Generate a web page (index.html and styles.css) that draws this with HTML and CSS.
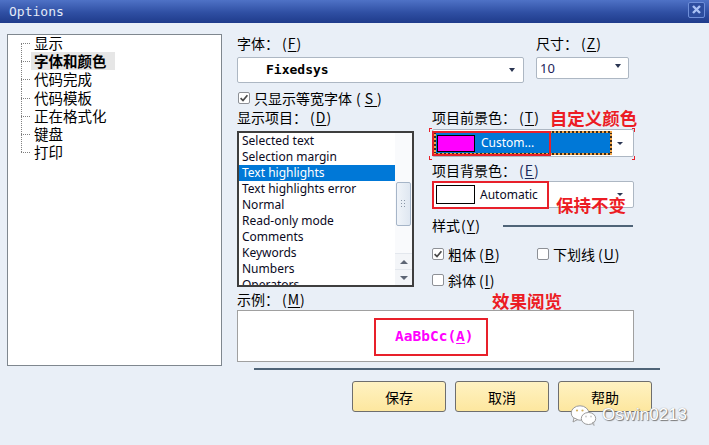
FILE: index.html
```html
<!DOCTYPE html>
<html lang="zh-CN">
<head>
<meta charset="utf-8">
<title>Options</title>
<link rel="stylesheet" href="styles.css">
</head>
<body>
<div class="titlebar">
  <span class="title">Options</span>
  <span class="close"><svg width="17" height="16" viewBox="0 0 17 16"><path d="M5 4 L12 11 M12 4 L5 11" stroke="#a9c1f5" stroke-width="2.4" fill="none"/></svg></span>
</div>
<div class="main">
  <div class="tree">
    <ul>
      <li class="first"><span class="conn"></span><span class="txt">显示</span></li>
      <li class="sel"><span class="conn"></span><span class="txt">字体和颜色</span></li>
      <li><span class="conn"></span><span class="txt">代码完成</span></li>
      <li><span class="conn"></span><span class="txt">代码模板</span></li>
      <li><span class="conn"></span><span class="txt">正在格式化</span></li>
      <li><span class="conn"></span><span class="txt">键盘</span></li>
      <li class="last"><span class="conn"></span><span class="txt">打印</span></li>
    </ul>
  </div>
  <div class="right">
    <div class="row1">
      <div class="font-fld">
        <div class="lbl">字体：<span class="key">(<u>F</u>)</span></div>
        <div class="combo font-combo"><span class="fixed">Fixedsys</span><span class="arrow"></span></div>
      </div>
      <div class="size-fld">
        <div class="lbl">尺寸：<span class="key">(<u>Z</u>)</span></div>
        <div class="combo size-combo"><span class="size-val">10</span><span class="arrow up"></span></div>
      </div>
    </div>
    <div class="chk-row top-chk"><span class="chk on"><svg width="12" height="12" viewBox="0 0 12 12"><path d="M2.6 6.2 L5 8.6 L9.4 3.2" stroke="#4a4a4a" stroke-width="1.7" fill="none"/></svg></span>只显示等宽字体<span class="key wide">(<u>S</u>)</span></div>
    <div class="cols">
      <div class="col-left">
        <div class="lbl">显示项目：<span class="key">(<u>D</u>)</span></div>
        <div class="listbox">
          <ul class="items">
            <li>Selected text</li>
            <li>Selection margin</li>
            <li class="hl">Text highlights</li>
            <li>Text highlights error</li>
            <li>Normal</li>
            <li>Read-only mode</li>
            <li>Comments</li>
            <li>Keywords</li>
            <li>Numbers</li>
            <li>Operators</li>
          </ul>
          <div class="scrollbar">
            <div class="thumb"><svg width="5" height="8" viewBox="0 0 5 8"><g fill="#8a96a6"><rect x="0" y="0" width="1" height="1"/><rect x="3" y="0" width="1" height="1"/><rect x="0" y="3" width="1" height="1"/><rect x="3" y="3" width="1" height="1"/><rect x="0" y="6" width="1" height="1"/><rect x="3" y="6" width="1" height="1"/></g></svg></div>
            <div class="sb-space"></div>
            <div class="sb-btn"><span class="tri-up"></span></div>
            <div class="sb-btn"><span class="tri-down"></span></div>
          </div>
        </div>
      </div>
      <div class="col-right">
        <div class="lbl-row">
          <span class="lbl">项目前景色：<span class="key">(<u>T</u>)</span></span>
          <span class="note note-fg">自定义颜色</span>
        </div>
        <div class="combo color-combo fg">
          <div class="sel-area"><span class="swatch magenta"></span><span class="ctext">Custom...</span></div>
          <span class="arrow small"></span>
          <span class="redbox rb-fg"></span>
          <span class="corners"></span>
        </div>
        <div class="lbl bg-lbl">项目背景色：<span class="key navy">(<u>E</u>)</span></div>
        <div class="combo color-combo bg">
          <span class="swatch white"></span><span class="ctext dark">Automatic</span>
          <span class="arrow small"></span>
          <span class="redbox rb-bg"></span>
          <span class="note note-bg">保持不变</span>
        </div>
        <div class="style-row">
          <span class="lbl style-lbl">样式<span class="key tight">(<u>Y</u>)</span></span>
          <span class="rule"></span>
        </div>
        <div class="chk-row style-chk">
          <span class="chk-item first-item"><span class="chk on"><svg width="12" height="12" viewBox="0 0 12 12"><path d="M2.6 6.2 L5 8.6 L9.4 3.2" stroke="#4a4a4a" stroke-width="1.7" fill="none"/></svg></span>粗体<span class="key">(<u>B</u>)</span></span>
          <span class="chk-item"><span class="chk"></span>下划线<span class="key">(<u>U</u>)</span></span>
        </div>
        <div class="chk-row style-chk2">
          <span class="chk-item"><span class="chk"></span>斜体<span class="key">(<u>I</u>)</span></span>
        </div>
      </div>
    </div>
    <div class="lbl-row sample-row">
      <span class="lbl sample-lbl">示例：<span class="key">(<u>M</u>)</span></span>
      <span class="note note-sample">效果阅览</span>
    </div>
    <div class="sample">
      <div class="sample-mark">AaBbCc(<u>A</u>)</div>
    </div>
    <div class="sep"></div>
    <div class="buttons">
      <button class="btn">保存</button>
      <button class="btn">取消</button>
      <button class="btn">帮助</button>
    </div>
  </div>
</div>
<div class="watermark">
  <svg width="27" height="22" viewBox="0 0 27 22">
    <ellipse cx="10" cy="9" rx="8.8" ry="7.2" fill="#fff" stroke="#9a9a9a" stroke-width="1"/>
    <path d="M4 14 L3 18 L7.5 15.5 Z" fill="#fff" stroke="#9a9a9a" stroke-width="1"/>
    <ellipse cx="18.5" cy="14.5" rx="7.2" ry="6" fill="#fff" stroke="#9a9a9a" stroke-width="1"/>
    <path d="M22 19 L24 21.5 L23.5 18 Z" fill="#fff" stroke="#9a9a9a" stroke-width="0.8"/>
    <circle cx="7" cy="6.5" r="1.1" fill="#d2b060"/>
    <circle cx="12.5" cy="6.5" r="1.1" fill="#d2b060"/>
    <circle cx="16" cy="12.5" r="0.9" fill="#c9c9c9"/>
    <circle cx="21" cy="12.5" r="0.9" fill="#c9c9c9"/>
  </svg>
  <span class="wm-text">Oswin0213</span>
</div>
</body>
</html>
```
FILE: styles.css
```css
* { box-sizing: border-box; margin: 0; padding: 0; }
html, body { width: 709px; height: 445px; overflow: hidden; }
body {
  background: #e9eff7;
  font-family: "Noto Sans CJK SC", "Noto Sans", sans-serif;
  font-size: 14px;
  line-height: 20px;
  color: #000;
  position: relative;
}
u { text-decoration: underline; text-underline-offset: 2px; }

/* title bar */
.titlebar {
  height: 23px;
  display: flex;
  align-items: center;
  padding: 0 4px 0 9px;
  background: linear-gradient(#4f72c6, #2f4fa3 55%, #1f3b8b);
}
.title {
  font-family: "DejaVu Sans Mono", monospace;
  font-size: 13px;
  line-height: 23px;
  color: #e3eaf8;
}
.close {
  margin-left: auto;
  align-self: flex-start;
  margin-top: 2px;
  width: 17px;
  height: 16px;
  background: #2d4d9f;
  border: 1px solid #6f8fd9;
  border-radius: 2px;
  display: flex;
}
.close svg { margin: -1px; }

/* main area */
.main { display: flex; padding: 11px 0 0 7px; }

.tree {
  width: 215px;
  height: 332px;
  flex: none;
  border: 1px solid #7f878f;
  background: #fff;
  padding-left: 13px;
}
.tree ul { list-style: none; margin-top: -1px; }
.tree li { display: flex; height: 18.2px; }
.conn {
  width: 10px;
  flex: none;
  background-image:
    repeating-linear-gradient(to bottom, #808080 0 1px, transparent 1px 2px),
    repeating-linear-gradient(to right, #808080 0 1px, transparent 1px 2px);
  background-size: 1px 100%, 10px 1px;
  background-position: 0 0, 0 9px;
  background-repeat: no-repeat;
}
.tree li.first .conn { background-size: 1px 9px, 10px 1px; background-position: 0 10px, 0 9px; }
.tree li.last .conn { background-size: 1px 10px, 10px 1px; background-position: 0 0, 0 9px; }
.tree .txt {
  font-size: 14.5px;
  line-height: 18.2px;
  padding: 0 8px 0 3px;
  white-space: nowrap;
}
.tree li.sel .txt { background: #e6e6e6; font-weight: bold; }

/* right side */
.right { margin-left: 15px; margin-top: -1px; width: 440px; flex: none; }
.lbl { height: 20px; line-height: 20px; white-space: nowrap; display: block; }
.key { margin-left: 3px; letter-spacing: 1px; }
.key.wide { letter-spacing: 4px; margin-left: 4px; }
.key.tight { margin-left: 1px; }
.key.navy { color: #1a2a5a; }

.row1 { display: flex; gap: 12px; }
.font-fld { width: 287px; }
.size-fld { width: 93px; }
.combo {
  background: #fff;
  border: 1px solid #adb7c3;
  border-radius: 2px;
  display: flex;
  align-items: center;
  position: relative;
}
.font-combo { height: 26px; margin-top: 4px; padding-left: 28px; }
.size-combo { height: 22px; margin-top: 4px; padding-left: 3px; }
.fixed {
  font-family: "DejaVu Sans Mono", monospace;
  font-weight: bold;
  font-size: 13px;
  line-height: 20px;
}
.size-val { font-family: "Noto Sans", sans-serif; font-size: 13px; color: #1e1e5a; line-height: 18px; }
.arrow {
  margin-left: auto;
  margin-right: 8px;
  width: 0;
  height: 0;
  border-left: 3.5px solid transparent;
  border-right: 3.5px solid transparent;
  border-top: 4px solid #2a3552;
}
.arrow.up { margin-right: 7px; margin-bottom: 4px; }
.arrow.small { border-left-width: 3px; border-right-width: 3px; border-top-width: 3.5px; margin-right: 9px; }

.chk-row { display: flex; align-items: center; height: 18px; line-height: 18px; white-space: nowrap; }
.top-chk { margin-top: 6px; margin-left: 1px; }
.chk {
  width: 12px;
  height: 12px;
  flex: none;
  border: 1px solid #8d9096;
  border-radius: 2px;
  background: #fff;
  margin-right: 4px;
  display: flex;
}
.chk svg { margin: -1px; }
.chk-item { display: flex; align-items: center; }

.cols { display: flex; }
.col-left { width: 177px; flex: none; }
.col-right { width: 202px; margin-left: 18px; flex: none; }

.listbox {
  margin-top: 4px;
  height: 156px;
  border: 2px solid #3e3e3e;
  background: #fff;
  display: flex;
}
.items {
  flex: 1;
  list-style: none;
  overflow: hidden;
  font-family: "Noto Sans", sans-serif;
  font-size: 12px;
  color: #0a0a1e;
}
.items li { height: 16px; line-height: 16px; padding-left: 3px; white-space: nowrap; }
.items li.hl { background: #0078d7; color: #fff; }
.scrollbar {
  width: 17px;
  flex: none;
  display: flex;
  flex-direction: column;
  background: #f9fafc;
}
.thumb {
  margin: 49px 1px 0 1px;
  height: 44px;
  border: 1px solid #a6b5c8;
  border-radius: 2px;
  background: linear-gradient(to right, #f0f4f9, #dfe7f1);
  display: flex;
  align-items: center;
  justify-content: center;
}
.sb-space { flex: 1; }
.sb-btn {
  height: 16px;
  background: #f3f5f8;
  border-top: 1px solid #e3e7ed;
  display: flex;
  align-items: center;
  justify-content: center;
}
.tri-up, .tri-down {
  width: 0; height: 0;
  border-left: 4px solid transparent;
  border-right: 4px solid transparent;
}
.tri-up { border-bottom: 4px solid #5e6674; }
.tri-down { border-top: 4px solid #5e6674; }

.lbl-row { display: flex; align-items: flex-start; height: 20px; white-space: nowrap; }
.note {
  color: #ec1c24;
  font-weight: bold;
  font-size: 17.5px;
  line-height: 20px;
}
.note-fg { margin-left: 10px; margin-top: 1px; }

.color-combo { padding: 1px; }
.color-combo.fg { height: 28px; margin-top: 2px; }
.color-combo.bg { height: 27px; margin-top: 1px; }
.bg-lbl { margin-top: 3px; }
.sel-area {
  width: 178px;
  height: 100%;
  display: flex;
  align-items: center;
  border: 2px dotted #f2a548;
  background: linear-gradient(#0078d7, #0078d7) padding-box, #3d2b18 border-box;
}
.swatch { border: 1px solid #000; flex: none; }
.swatch.magenta { width: 38px; height: 17px; background: #ff00ff; margin-left: 1px; }
.swatch.white { width: 39px; height: 19px; background: #fff; margin-left: 2px; }
.ctext { font-family: "Noto Sans", sans-serif; font-size: 12px; color: #fff; margin-left: 6px; line-height: 16px; }
.ctext.dark { color: #0a0a1e; margin-left: 5px; }

.redbox { position: absolute; border: 2px solid #e8202a; }
.rb-fg { left: -1px; top: 1px; width: 119px; height: 25px; }
.rb-bg { left: -1px; top: -1px; width: 117px; height: 28px; }
.corners {
  position: absolute;
  left: -4px; top: -2px; width: 206px; height: 32px;
  background:
    linear-gradient(#e8202a, #e8202a) left top / 3px 1px no-repeat,
    linear-gradient(#e8202a, #e8202a) left top / 1px 4px no-repeat,
    linear-gradient(#e8202a, #e8202a) right top / 3px 1px no-repeat,
    linear-gradient(#e8202a, #e8202a) right top / 1px 4px no-repeat,
    linear-gradient(#e8202a, #e8202a) left bottom / 3px 1px no-repeat,
    linear-gradient(#e8202a, #e8202a) left bottom / 1px 4px no-repeat,
    linear-gradient(#e8202a, #e8202a) right bottom / 3px 1px no-repeat,
    linear-gradient(#e8202a, #e8202a) right bottom / 1px 4px no-repeat;
}
.note-bg { position: absolute; left: 123px; top: 13px; white-space: nowrap; }

.style-row { display: flex; align-items: center; height: 20px; margin-top: 7px; }
.style-lbl { width: 71px; }
.rule { width: 130px; height: 2px; background: #4f6478; margin-top: 2px; }
.style-chk { margin-top: 10px; }
.style-chk2 { margin-top: 8px; }
.first-item { width: 105px; }

.sample-row { margin-top: 0; }
.sample-lbl { width: 255px; }
.note-sample { margin-top: 2px; }
.sample {
  margin-top: 1px;
  width: 397px;
  height: 52px;
  border: 1px solid #a0a0a0;
  background: #fff;
  padding: 7px 0 0 136px;
}
.sample-mark {
  width: 114px;
  height: 38px;
  border: 2px solid #e8202a;
  display: flex;
  align-items: center;
  padding: 0 0 2px 19px;
  font-family: "DejaVu Sans Mono", monospace;
  font-weight: bold;
  font-size: 14.5px;
  color: #ff00ff;
}
.sep { margin: 6px 0 0 17px; width: 406px; height: 2px; background: #4f6478; }
.buttons { display: flex; gap: 9px; margin: 11px 0 0 115px; }
.btn {
  width: 94px;
  height: 31px;
  border: 1px solid #6e6e6e;
  border-radius: 3px;
  background: linear-gradient(#fff2c2, #fde79f);
  font-family: "Noto Sans CJK SC", sans-serif;
  font-size: 14px;
  color: #000;
  display: flex;
  align-items: center;
  justify-content: center;
}

.watermark {
  position: absolute;
  left: 570px;
  top: 404px;
  display: flex;
  align-items: center;
  gap: 5px;
}
.wm-text {
  font-family: "Liberation Sans", sans-serif;
  font-size: 17px;
  line-height: 22px;
  color: #fff;
  text-shadow: 1px 1px 1px #777, 0 0 1px #888;
}
```
